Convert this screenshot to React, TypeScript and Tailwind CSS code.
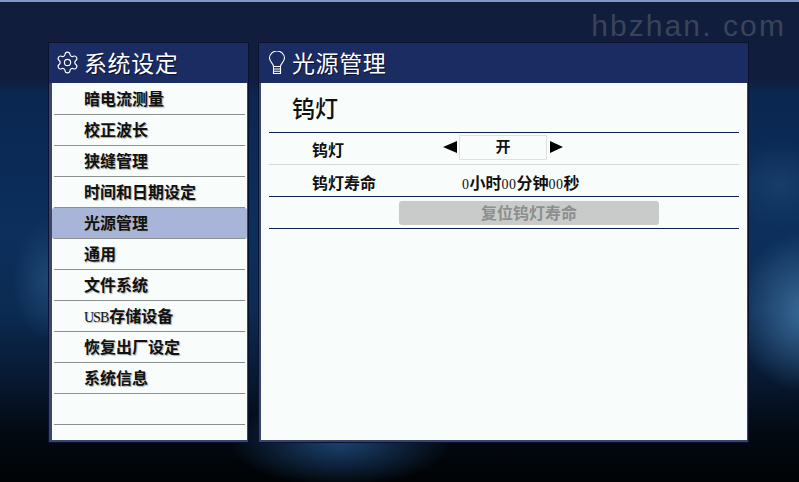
import type { ReactNode } from 'react';
import { Settings } from 'lucide-react';

const menu: ReactNode[] = ['暗电流测量','校正波长','狭缝管理','时间和日期设定','光源管理','通用','文件系统',
  <><span className="font-normal font-['Liberation_Serif',serif] text-[14px] tracking-[-1px] mr-px">USB</span>存储设备</>,
  '恢复出厂设定','系统信息',''];

const Panel = ({ className, bodyClass, icon, title, children }: { className: string; bodyClass: string; icon: ReactNode; title: string; children: ReactNode }) => (
  <section className={`flex flex-col h-[401px] border border-[#0a1230] bg-[#39456a] ${className}`}>
    <header className="h-[40px] shrink-0 bg-[#1b2c63] flex items-center text-white text-[23px]">
      {icon}
      <span className="tracking-[0.6px] -mt-[2px] [text-shadow:1px_1px_0_#0a1030]">{title}</span>
    </header>
    <div className={`flex-1 bg-[#f8fdfb] min-h-0 ${bodyClass}`}>{children}</div>
  </section>
);

const Num = ({ children }: { children: string }) => (
  <span className="font-normal font-['Liberation_Serif',serif] text-[14px] tracking-[0.5px]">{children}</span>
);

export default function App() {
  return (
    <div className="relative w-[799px] h-[482px] overflow-hidden font-['Noto_Sans_CJK_SC','Liberation_Sans',sans-serif] bg-[linear-gradient(180deg,#111d3c_0,#111d3c_78px,rgba(17,29,60,0)_96px),radial-gradient(ellipse_70px_80px_at_805px_312px,#3a6a98_0%,rgba(58,106,152,0)_100%),radial-gradient(ellipse_55px_45px_at_780px_185px,#173d69_0%,rgba(23,61,105,0)_100%),radial-gradient(ellipse_110px_45px_at_340px_442px,#1a4270_0%,rgba(26,66,112,0)_100%),radial-gradient(ellipse_35px_60px_at_48px_280px,#1e4673_0%,rgba(30,70,115,0)_100%),linear-gradient(180deg,#0a2650_85px,#0c2f5c_230px,#0b2b52_310px,#081b36_370px,#030a13_430px,#010305_100%)]">
      <div className="h-[2px] bg-[#7f9ac8]" />
      <div className="absolute right-[13px] top-[8px] font-['Liberation_Sans',sans-serif] text-[30px] leading-[36px] tracking-[2.1px] text-[#3a4458]">hbzhan. com</div>
      <main className="flex gap-[9px] pl-[48px] pt-[40px]">
        <Panel className="w-[201px]" bodyClass="ml-[3px] mr-px mb-[2px]" title="系统设定" icon={
          <Settings className="ml-[6px] mr-[4px] -mt-[2px]" size={25} strokeWidth={1.1} />
        }>
          <ul className="pt-px">
            {menu.map((m, i) => (
              <li key={i} className={`h-[31px] ${i === 4 ? 'bg-[#a9b5d8] rounded-[2px]' : ''}`}>
                <div className="h-full mx-[2px] border-b border-[#8c908e] pl-[30px] pb-[2px] flex items-center text-[16px] font-bold text-[#111] [text-shadow:1px_1px_1px_#aaa]">
                  <span>{m}</span>
                </div>
              </li>
            ))}
          </ul>
        </Panel>
        <Panel className="w-[491px]" bodyClass="ml-[2px] mr-px mb-[2px]" title="光源管理" icon={
          <svg className="ml-[8px] mr-[5px] -mt-[1px]" width="20" height="24" viewBox="0 0 20 24" fill="none" stroke="white" strokeWidth="1.1"><path d="M6.500 15.500c0-3-4-4.500-4-8.500a7.500 7 0 0 1 15 0c0 4-4 5.500-4 8.500z"/><path d="M6.500 15.500V22.500h7V15.500M6.500 18h7M6.500 20.300h7"/></svg>
        }>
          <div className="h-[49px] pl-[31px] flex items-center text-[23px] font-medium text-[#111]">钨灯</div>
          <div className="mx-[8px] text-[16px] font-bold text-[#111]">
            <div className="h-[33px] border-t border-b border-t-[#10204f] border-b-[#d4d8d6] flex items-center">
              <span className="w-[174px] pl-[43px] pt-px">钨灯</span>
              <div className="flex items-center gap-[2px] -mt-[3px]">
                <span className="w-0 h-0 border-y-[6px] border-y-transparent border-r-[14px] border-r-black" />
                <span className="w-[88px] h-[25px] border border-[#dde2e0] flex items-center justify-center text-[15px] pb-[2px]">开</span>
                <span className="w-0 h-0 border-y-[6px] border-y-transparent border-l-[13px] border-l-black ml-[1px]" />
              </div>
            </div>
            <div className="h-[32px] border-b border-[#10204f] flex items-center">
              <span className="w-[193px] pl-[43px] pt-[3px]">钨灯寿命</span>
              <span className="flex items-baseline pt-[3px]"><Num>0</Num>小时<Num>00</Num>分钟<Num>00</Num>秒</span>
            </div>
            <div className="h-[32px] border-b border-[#10204f] flex items-center pl-[130px]">
              <div className="w-[260px] h-[24px] rounded-[3px] bg-[#c9cbca] text-[#8d8f8e] flex items-center justify-center pb-[2px]">复位钨灯寿命</div>
            </div>
          </div>
        </Panel>
      </main>
    </div>
  );
}
